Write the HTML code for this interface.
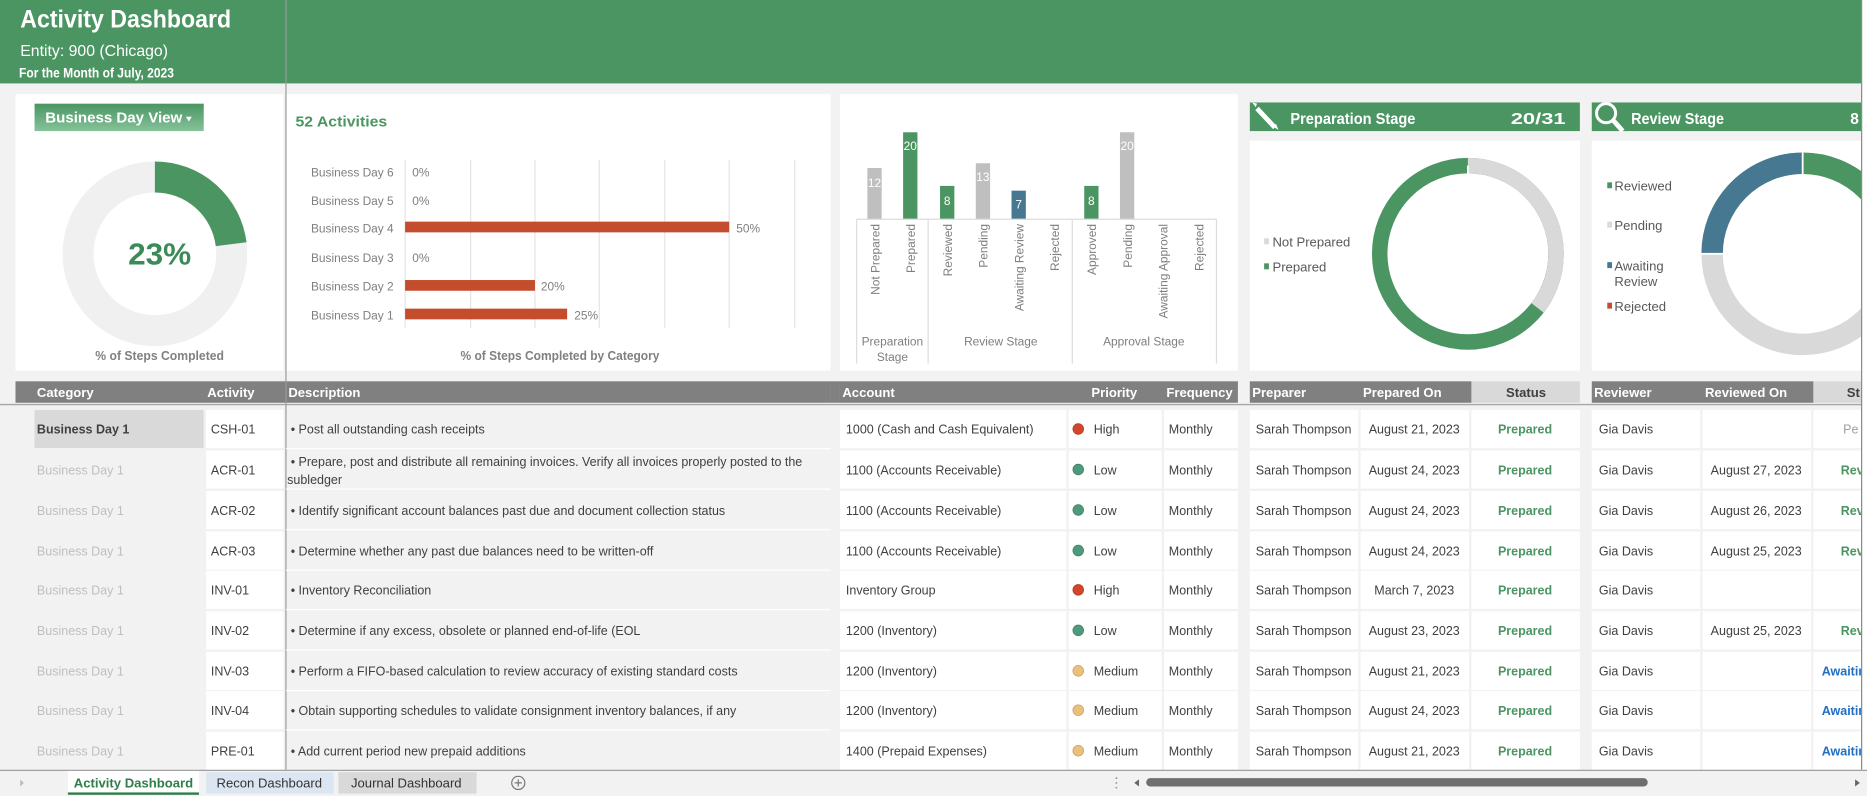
<!DOCTYPE html>
<html><head><meta charset="utf-8"><style>
html,body{margin:0;padding:0;background:#f2f2f2;overflow:hidden}
svg{display:block}
text{font-family:"Liberation Sans",Arial,sans-serif}
</style></head><body>
<svg width="1867" height="796" viewBox="0 0 1567 668" preserveAspectRatio="none" xmlns="http://www.w3.org/2000/svg">
<defs><clipPath id="cl"><rect x="0" y="0" width="1562" height="668"/></clipPath></defs>
<rect width="1567" height="668" fill="#f2f2f2"/>
<g clip-path="url(#cl)">
<!-- header -->
<rect x="0" y="0" width="1562" height="70" fill="#4a9562"/>
<text x="17" y="23" font-size="21" font-weight="bold" fill="#fff" textLength="177" lengthAdjust="spacingAndGlyphs">Activity Dashboard</text>
<text x="17" y="47" font-size="13.5" fill="#fff" textLength="124" lengthAdjust="spacingAndGlyphs">Entity: 900 (Chicago)</text>
<text x="16" y="65" font-size="11.5" font-weight="bold" fill="#fff" textLength="130" lengthAdjust="spacingAndGlyphs">For the Month of July, 2023</text>

<!-- panels -->
<rect x="13" y="79" width="225" height="232" fill="#fff"/>
<rect x="240" y="79" width="457" height="232" fill="#fff"/>
<rect x="705" y="79" width="334" height="232" fill="#fff"/>
<rect x="1049" y="118" width="277" height="193" fill="#fff"/>
<rect x="1336" y="118" width="230" height="193" fill="#fff"/>

<!-- panel1 -->
<defs><linearGradient id="bg1" x1="0" y1="0" x2="0" y2="1"><stop offset="0" stop-color="#4a9562"/><stop offset="1" stop-color="#86c29a"/></linearGradient></defs>
<rect x="29" y="87" width="142" height="23" fill="url(#bg1)"/>
<text x="38" y="103" font-size="12" font-weight="bold" fill="#fff" textLength="115" lengthAdjust="spacingAndGlyphs">Business Day View</text>
<path d="M156 98 l5 0 l-2.5 4z" fill="#fff"/>
<circle cx="130" cy="213" r="64.5" fill="none" stroke="#f0f0f0" stroke-width="26"/>
<circle cx="130" cy="213" r="64.5" fill="none" stroke="#4a9562" stroke-width="26" stroke-dasharray="93.2 500" transform="rotate(-90 130 213)"/>
<text x="134" y="222" font-size="26" font-weight="bold" fill="#3c8a57" text-anchor="middle" textLength="53" lengthAdjust="spacingAndGlyphs">23%</text>
<text x="134" y="302" font-size="11" font-weight="bold" fill="#808080" text-anchor="middle" textLength="108" lengthAdjust="spacingAndGlyphs">% of Steps Completed</text>

<!-- panel2 bar chart -->
<text x="248" y="106" font-size="12" font-weight="bold" fill="#4a9562" textLength="77" lengthAdjust="spacingAndGlyphs">52 Activities</text>
<g stroke="#e4e4e4" stroke-width="1">
<line x1="340" y1="134" x2="340" y2="275"/><line x1="395" y1="134" x2="395" y2="275"/><line x1="449" y1="134" x2="449" y2="275"/><line x1="503" y1="134" x2="503" y2="275"/><line x1="558" y1="134" x2="558" y2="275"/><line x1="612" y1="134" x2="612" y2="275"/><line x1="667" y1="134" x2="667" y2="275"/>
</g>
<g font-size="10" fill="#7f7f7f">
<text x="261" y="148">Business Day 6</text><text x="261" y="172">Business Day 5</text><text x="261" y="195">Business Day 4</text><text x="261" y="220">Business Day 3</text><text x="261" y="244">Business Day 2</text><text x="261" y="268">Business Day 1</text>
<text x="346" y="148">0%</text><text x="346" y="172">0%</text><text x="618" y="195">50%</text><text x="346" y="220">0%</text><text x="454" y="244">20%</text><text x="482" y="268">25%</text>
</g>
<rect x="340" y="186" width="272" height="9" fill="#c44d2d"/>
<rect x="340" y="235" width="109" height="9" fill="#c44d2d"/>
<rect x="340" y="259" width="136" height="9" fill="#c44d2d"/>
<text x="470" y="302" font-size="11" font-weight="bold" fill="#808080" text-anchor="middle" textLength="167" lengthAdjust="spacingAndGlyphs">% of Steps Completed by Category</text>

<!-- panel3 column chart -->
<rect x="728" y="141" width="12" height="43" fill="#bfbfbf"/>
<rect x="758" y="111" width="12" height="73" fill="#4a9562"/>
<rect x="789" y="156" width="12" height="28" fill="#4a9562"/>
<rect x="819" y="137" width="12" height="47" fill="#bfbfbf"/>
<rect x="849" y="160" width="12" height="24" fill="#467891"/>
<rect x="910" y="156" width="12" height="28" fill="#4a9562"/>
<rect x="940" y="111" width="12" height="73" fill="#bfbfbf"/>
<g font-size="10" fill="#fff" text-anchor="middle">
<text x="734" y="157">12</text><text x="764" y="126">20</text><text x="795" y="172">8</text><text x="825" y="152">13</text><text x="855" y="175">7</text><text x="916" y="172">8</text><text x="946" y="126">20</text>
</g>
<g stroke="#dcdcdc" stroke-width="1">
<line x1="719" y1="184" x2="1021" y2="184"/>
<line x1="719" y1="184" x2="719" y2="305"/><line x1="779" y1="184" x2="779" y2="305"/><line x1="900" y1="184" x2="900" y2="305"/><line x1="1021" y1="184" x2="1021" y2="305"/>
</g>
<g font-size="10" fill="#7f7f7f" text-anchor="end">
<text transform="translate(738,188) rotate(-90)">Not Prepared</text>
<text transform="translate(768,188) rotate(-90)">Prepared</text>
<text transform="translate(799,188) rotate(-90)">Reviewed</text>
<text transform="translate(829,188) rotate(-90)">Pending</text>
<text transform="translate(859,188) rotate(-90)">Awaiting Review</text>
<text transform="translate(889,188) rotate(-90)">Rejected</text>
<text transform="translate(920,188) rotate(-90)">Approved</text>
<text transform="translate(950,188) rotate(-90)">Pending</text>
<text transform="translate(980,188) rotate(-90)">Awaiting Approval</text>
<text transform="translate(1010,188) rotate(-90)">Rejected</text>
</g>
<g font-size="10" fill="#7f7f7f" text-anchor="middle">
<text x="749" y="290">Preparation</text><text x="749" y="303">Stage</text>
<text x="840" y="290">Review Stage</text>
<text x="960" y="290">Approval Stage</text>
</g>

<!-- prep stage -->
<rect x="1049" y="86" width="277" height="24" fill="#4a9562"/>
<path d="M1055 91 l15 16" stroke="#fff" stroke-width="4"/>
<path d="M1051 86 l4 1 l-1 3 z" fill="#fff"/>
<path d="M1068 106 l5 3 l-2 -5z" fill="#fff"/>
<text x="1083" y="104" font-size="13" font-weight="bold" fill="#fff" textLength="105" lengthAdjust="spacingAndGlyphs">Preparation Stage</text>
<text x="1268" y="104" font-size="13" font-weight="bold" fill="#fff" textLength="46" lengthAdjust="spacingAndGlyphs">20/31</text>
<circle cx="1232" cy="213" r="74" fill="none" stroke="#4a9562" stroke-width="13"/>
<circle cx="1232" cy="213" r="74" fill="none" stroke="#d9d9d9" stroke-width="13" stroke-dasharray="165 500" transform="rotate(-90 1232 213)"/>
<line x1="1232" y1="139" x2="1232" y2="153" stroke="#fff" stroke-width="1.5"/>
<rect x="1061" y="200" width="4" height="5" fill="#d9d9d9"/><text x="1068" y="207" font-size="11" fill="#595959">Not Prepared</text>
<rect x="1061" y="221" width="4" height="5" fill="#4a9562"/><text x="1068" y="228" font-size="11" fill="#595959">Prepared</text>

<!-- review stage -->
<rect x="1336" y="86" width="230" height="24" fill="#4a9562"/>
<circle cx="1348" cy="95" r="8" fill="none" stroke="#fff" stroke-width="2.5"/>
<path d="M1354 101 l8 9" stroke="#fff" stroke-width="4"/>
<text x="1369" y="104" font-size="13" font-weight="bold" fill="#fff" textLength="78" lengthAdjust="spacingAndGlyphs">Review Stage</text>
<text x="1553" y="104" font-size="13" font-weight="bold" fill="#fff">8</text>
<circle cx="1513" cy="213" r="76" fill="none" stroke="#d9d9d9" stroke-width="18"/>
<circle cx="1513" cy="213" r="76" fill="none" stroke="#4a9562" stroke-width="18" stroke-dasharray="120 500" transform="rotate(-90 1513 213)"/>
<circle cx="1513" cy="213" r="76" fill="none" stroke="#467891" stroke-width="18" stroke-dasharray="119.4 500" transform="rotate(180 1513 213)"/>
<line x1="1513" y1="127" x2="1513" y2="147" stroke="#fff" stroke-width="1.5"/>
<line x1="1427" y1="213" x2="1447" y2="213" stroke="#fff" stroke-width="1.5"/>
<g font-size="11" fill="#595959">
<rect x="1349" y="153" width="4" height="5" fill="#4a9562"/><text x="1355" y="160">Reviewed</text>
<rect x="1349" y="186" width="4" height="5" fill="#d9d9d9"/><text x="1355" y="193">Pending</text>
<rect x="1349" y="220" width="4" height="5" fill="#467891"/><text x="1355" y="227">Awaiting</text><text x="1355" y="240">Review</text>
<rect x="1349" y="254" width="4" height="5" fill="#c44d2d"/><text x="1355" y="261">Rejected</text>
</g>

<!-- table header -->
<rect x="13" y="320" width="684" height="18" fill="#808080"/>
<rect x="697" y="320" width="8" height="18" fill="#808080"/>
<rect x="705" y="320" width="334" height="18" fill="#808080"/>
<rect x="1049" y="320" width="186" height="18" fill="#808080"/>
<rect x="1235" y="320" width="91" height="18" fill="#d9d9d9"/>
<rect x="1336" y="320" width="186" height="18" fill="#808080"/>
<rect x="1522" y="320" width="45" height="18" fill="#d9d9d9"/>
<line x1="0" y1="339.5" x2="1562" y2="339.5" stroke="#a6a6a6" stroke-width="1.2"/>
<g font-size="11" font-weight="bold" fill="#fff">
<text x="31" y="333">Category</text><text x="174" y="333">Activity</text><text x="242" y="333">Description</text><text x="707" y="333">Account</text><text x="916" y="333">Priority</text><text x="979" y="333">Frequency</text>
<text x="1051" y="333">Preparer</text><text x="1144" y="333">Prepared On</text><text x="1264" y="333" fill="#404040">Status</text>
<text x="1338" y="333">Reviewer</text><text x="1431" y="333">Reviewed On</text><text x="1550" y="333" fill="#404040">St</text>
</g>
<line x1="240" y1="0" x2="240" y2="646" stroke="#9a9a9a" stroke-width="1"/>

<!-- rows -->
<g id="rows" font-size="10.5" fill="#404040">
</g>
</g>
<rect x="1562" y="0" width="5" height="646" fill="#fff"/>
<line x1="1562.5" y1="0" x2="1562.5" y2="646" stroke="#888" stroke-width="1"/>
<!-- tab bar -->
<rect x="0" y="646" width="1567" height="22" fill="#f2f2f2"/>
<line x1="0" y1="646.5" x2="1567" y2="646.5" stroke="#a0a0a0" stroke-width="1"/>
<path d="M17 654 l3 3 l-3 3z" fill="#bbb"/>
<rect x="57" y="647" width="110" height="20" fill="#fff"/>
<rect x="57" y="665" width="110" height="2" fill="#2e7d4a"/>
<text x="112" y="661" font-size="11" font-weight="bold" fill="#2e7d4a" text-anchor="middle">Activity Dashboard</text>
<rect x="173" y="648" width="107" height="18" fill="#dce6f2"/>
<text x="226" y="661" font-size="11" fill="#333" text-anchor="middle">Recon Dashboard</text>
<rect x="284" y="648" width="116" height="18" fill="#d9d9d9"/>
<text x="341" y="661" font-size="11" fill="#333" text-anchor="middle">Journal Dashboard</text>
<circle cx="435" cy="657" r="5.5" fill="none" stroke="#777" stroke-width="1"/>
<path d="M432 657 h6 M435 654 v6" stroke="#777" stroke-width="1"/>
<g fill="#999"><circle cx="937" cy="653" r=".8"/><circle cx="937" cy="657" r=".8"/><circle cx="937" cy="661" r=".8"/></g>
<path d="M952 657 l4 -3 v6z" fill="#666"/>
<rect x="962" y="653" width="421" height="7" rx="3.5" fill="#6f6f6f"/>
<path d="M1557 654 l4 3 l-4 3z" fill="#666"/>
</svg>
<script>
(function(){
var R=[
["CSH-01","• Post all outstanding cash receipts","1000 (Cash and Cash Equivalent)","High","August 21, 2023","","Pe","p"],
["ACR-01","","1100 (Accounts Receivable)","Low","August 24, 2023","August 27, 2023","Rev","r"],
["ACR-02","• Identify significant account balances past due and document collection status","1100 (Accounts Receivable)","Low","August 24, 2023","August 26, 2023","Rev","r"],
["ACR-03","• Determine whether any past due balances need to be written-off","1100 (Accounts Receivable)","Low","August 24, 2023","August 25, 2023","Rev","r"],
["INV-01","• Inventory Reconciliation","Inventory Group","High","March 7, 2023","","",""],
["INV-02","• Determine if any excess, obsolete or planned end-of-life (EOL","1200 (Inventory)","Low","August 23, 2023","August 25, 2023","Rev","r"],
["INV-03","• Perform a FIFO-based calculation to review accuracy of existing standard costs","1200 (Inventory)","Medium","August 21, 2023","","Awaitin","a"],
["INV-04","• Obtain supporting schedules to validate consignment inventory balances, if any","1200 (Inventory)","Medium","August 24, 2023","","Awaitin","a"],
["PRE-01","• Add current period new prepaid additions","1400 (Prepaid Expenses)","Medium","August 21, 2023","","Awaitin","a"]];
var ns="http://www.w3.org/2000/svg",g=document.getElementById("rows");
function rc(x,y,w,h,f){var e=document.createElementNS(ns,"rect");e.setAttribute("x",x);e.setAttribute("y",y);e.setAttribute("width",w);e.setAttribute("height",h);e.setAttribute("fill",f);g.appendChild(e);}
function tx(x,y,s,o){var e=document.createElementNS(ns,"text");e.setAttribute("x",x);e.setAttribute("y",y);e.textContent=s;for(var k in (o||{}))e.setAttribute(k,o[k]);g.appendChild(e);}
var cols=[[173,65],[705,190],[897,78],[977,62],[1049,91],[1142,91],[1235,91],[1336,91],[1429,91],[1522,45]];
var pc={High:["#d2472c","#b03a22"],Low:["#4f9a7c","#3f8067"],Medium:["#eac07c","#c9a060"]};
for(var i=0;i<R.length;i++){
 var r=R[i],cy=[360,394,428,462,495,529,563,596,630][i],t=cy-16,b=cy+4;
 cols.forEach(function(c){rc(c[0],t,c[1],32,"#fff");});
 rc(240,t+32,457,1,"#fff");
 if(i==0){rc(29,t,142,32,"#d9d9d9");tx(31,b,"Business Day 1",{"font-weight":"bold"});}
 else tx(31,b,"Business Day 1",{fill:"#bfbfbf"});
 tx(177,b,r[0]);
 if(i==1){tx(244,cy-3,"• Prepare, post and distribute all remaining invoices. Verify all invoices properly posted to the");tx(241,cy+12,"subledger");}
 else tx(244,b,r[1]);
 tx(710,b,r[2]);
 var c=document.createElementNS(ns,"circle");c.setAttribute("cx",905);c.setAttribute("cy",cy);c.setAttribute("r",4.5);c.setAttribute("fill",pc[r[3]][0]);c.setAttribute("stroke",pc[r[3]][1]);c.setAttribute("stroke-width",0.6);g.appendChild(c);
 tx(918,b,r[3]);tx(981,b,"Monthly");
 tx(1054,b,"Sarah Thompson");tx(1187,b,r[4],{"text-anchor":"middle"});
 tx(1280,b,"Prepared",{"text-anchor":"middle","font-weight":"bold",fill:"#4a9562"});
 tx(1342,b,"Gia Davis");
 if(r[5])tx(1474,b,r[5],{"text-anchor":"middle"});
 if(r[7]=="p")tx(1547,b,r[6],{fill:"#a0a0a0"});
 if(r[7]=="r")tx(1545,b,r[6],{fill:"#4a9562","font-weight":"bold"});
 if(r[7]=="a")tx(1529,b,r[6],{fill:"#1f6fc5","font-weight":"bold"});
}
})();
</script>
</body></html>
